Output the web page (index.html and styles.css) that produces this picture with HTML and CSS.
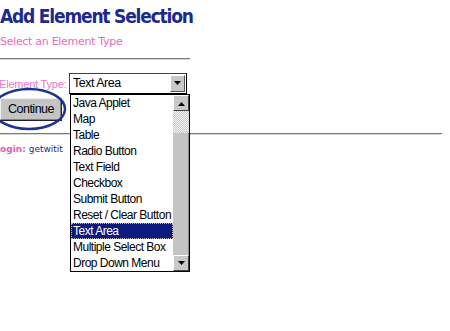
FILE: index.html
```html
<!DOCTYPE html>
<html>
<head>
<meta charset="utf-8">
<link rel="stylesheet" href="styles.css">
</head>
<body>
<div class="page">
  <h1 class="title">Add Element Selection</h1>
  <div class="subtitle">Select an Element Type</div>
  <div class="rule short"></div>
  <div class="field-row">
    <span class="label">Element Type:</span>
    <div class="select">
      <span class="select-value">Text Area</span>
      <span class="select-btn"><svg width="9" height="5" viewBox="0 0 9 5"><path d="M1 0h7L4.5 4z" fill="#000"/></svg></span>
    </div>
  </div>
  <div class="button-row">
    <div class="btn">Continue</div>
  </div>
  <div class="rule long"></div>
  <div class="login"><span class="login-label">login:</span> <span class="login-name">getwitit</span></div>

  <svg class="ellipse" width="80" height="48" viewBox="0 0 80 48"><ellipse cx="37" cy="22" rx="36" ry="20" fill="none" stroke="#1c3393" stroke-width="2.5"/></svg>

  <div class="listbox">
    <ul class="items">
      <li>Java Applet</li>
      <li>Map</li>
      <li>Table</li>
      <li>Radio Button</li>
      <li>Text Field</li>
      <li>Checkbox</li>
      <li>Submit Button</li>
      <li>Reset / Clear Button</li>
      <li class="selected">Text Area</li>
      <li>Multiple Select Box</li>
      <li>Drop Down Menu</li>
    </ul>
    <div class="scrollbar">
      <div class="arrow"><svg width="9" height="5" viewBox="0 0 9 5"><path d="M1 5h7L4.5 1z" fill="#000"/></svg></div>
      <div class="track-top"></div>
      <div class="thumb"></div>
      <div class="arrow"><svg width="9" height="5" viewBox="0 0 9 5"><path d="M1 0h7L4.5 4z" fill="#000"/></svg></div>
    </div>
  </div>
</div>
</body>
</html>
```
FILE: styles.css
```css
html, body {
  margin: 0;
  padding: 0;
  background: #fff;
}
.page {
  position: relative;
  width: 450px;
  height: 331px;
  overflow: hidden;
}
.title {
  margin: 0;
  padding-top: 4px;
  height: 27px;
  font-family: "DejaVu Sans Condensed", "DejaVu Sans", sans-serif;
  font-weight: bold;
  font-size: 19px;
  line-height: 24px;
  color: #1b2a8c;
  letter-spacing: -1.2px;
  white-space: nowrap;
}
.subtitle {
  height: 20px;
  font-family: "DejaVu Sans", sans-serif;
  font-size: 11px;
  line-height: 14px;
  color: #e66cb8;
  padding-top: 4px;
  box-sizing: border-box;
  letter-spacing: -0.3px;
  white-space: nowrap;
}
.rule {
  border-top: 1px solid #7a7a7a;
  border-bottom: 1px solid #d8d8d8;
}
.rule.short {
  width: 190px;
  margin-top: 7px;
}
.rule.long {
  width: 442px;
  margin-top: 11px;
}
.field-row {
  display: flex;
  align-items: center;
  margin-top: 13px;
  height: 21px;
}
.label {
  width: 70px;
  flex: none;
  margin-left: -1px;
  font-family: "Liberation Sans", sans-serif;
  font-size: 11px;
  color: #e67ac0;
  white-space: nowrap;
  letter-spacing: -0.2px;
}
.select {
  display: flex;
  width: 118px;
  height: 21px;
  box-sizing: border-box;
  border: 1px solid #000;
  border-top-color: #404040;
  border-left-color: #404040;
  background: #fff;
}
.select-value {
  flex: 1;
  font-family: "Liberation Sans", sans-serif;
  font-size: 12.5px;
  letter-spacing: -0.5px;
  line-height: 19px;
  padding-left: 3px;
}
.select-btn {
  width: 15px;
  margin: 1px;
  box-sizing: border-box;
  background: #c8c8c8;
  border: 1px solid #fff;
  border-right-color: #555;
  border-bottom-color: #555;
  display: flex;
  align-items: center;
  justify-content: center;
}
.button-row {
  margin-top: 4px;
  height: 24px;
}
.btn {
  width: 62px;
  height: 23px;
  box-sizing: border-box;
  background: #c4c4c4;
  border: 1px solid #222;
  border-top-color: #f0f0f0;
  border-left-color: #f0f0f0;
  box-shadow: inset -1px -1px 0 #808080;
  font-family: "Liberation Sans", sans-serif;
  font-size: 12.5px;
  letter-spacing: -0.5px;
  line-height: 21px;
  text-align: center;
  color: #000;
}
.login {
  margin-top: 8px;
  margin-left: -3px;
  font-family: "DejaVu Sans", sans-serif;
  font-size: 9px;
  line-height: 12px;
  white-space: nowrap;
}
.login-label {
  color: #e060b0;
  font-weight: bold;
}
.login-name {
  color: #1b2a8c;
}
.ellipse {
  position: absolute;
  left: -8px;
  top: 87px;
}
.listbox {
  position: absolute;
  left: 70px;
  top: 94px;
  width: 120px;
  height: 178px;
  box-sizing: border-box;
  border: 1px solid #000;
  background: #fff;
  display: flex;
}
.items {
  list-style: none;
  margin: 0;
  padding: 0;
  flex: 1;
  min-width: 0;
  overflow: hidden;
}
.items li {
  height: 16px;
  font-family: "Liberation Sans", sans-serif;
  font-size: 12px;
  letter-spacing: -0.5px;
  line-height: 16px;
  padding-left: 2px;
  color: #000;
  white-space: nowrap;
}
.items li.selected {
  background: #0c1a80;
  color: #fff;
  outline: 1px dotted #bbb;
  outline-offset: -1px;
}
.scrollbar {
  width: 16px;
  flex: none;
  display: flex;
  flex-direction: column;
  background: #c4c4c4;
}
.arrow {
  height: 16px;
  box-sizing: border-box;
  background: #c8c8c8;
  border: 1px solid #fff;
  border-right-color: #444;
  border-bottom-color: #444;
  display: flex;
  align-items: center;
  justify-content: center;
}
.track-top {
  height: 22px;
  background-color: #e0e0e0;
  background-image: repeating-conic-gradient(#c8c8c8 0 25%, #f4f4f4 0 50%);
  background-size: 2px 2px;
}
.thumb {
  flex: 1;
  background: #c4c4c4;
  border-right: 1px solid #8a8a8a;
}
```
